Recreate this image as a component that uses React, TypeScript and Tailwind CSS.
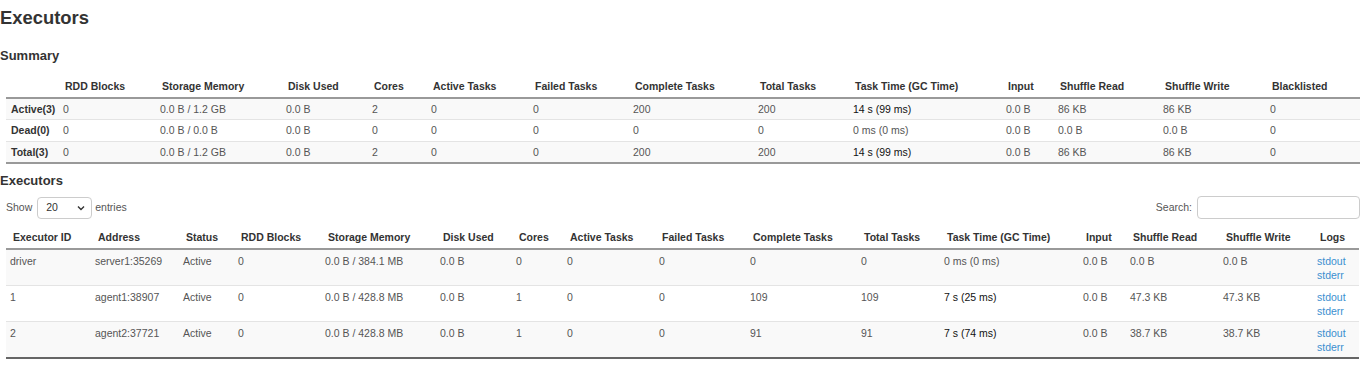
import React from 'react';

const font = { fontFamily: '"Liberation Sans", Arial, sans-serif' };

const summaryCols: { label: string; w: string }[] = [
  { label: '', w: 'w-[53px]' },
  { label: 'RDD Blocks', w: 'w-[97px]' },
  { label: 'Storage Memory', w: 'w-[126px]' },
  { label: 'Disk Used', w: 'w-[86px]' },
  { label: 'Cores', w: 'w-[59px]' },
  { label: 'Active Tasks', w: 'w-[102px]' },
  { label: 'Failed Tasks', w: 'w-[100px]' },
  { label: 'Complete Tasks', w: 'w-[125px]' },
  { label: 'Total Tasks', w: 'w-[95px]' },
  { label: 'Task Time (GC Time)', w: 'w-[153px]' },
  { label: 'Input', w: 'w-[52px]' },
  { label: 'Shuffle Read', w: 'w-[105px]' },
  { label: 'Shuffle Write', w: 'w-[107px]' },
  { label: 'Blacklisted', w: 'w-[94px]' },
];

const summaryRows = [
  ['Active(3)', '0', '0.0 B / 1.2 GB', '0.0 B', '2', '0', '0', '200', '200', '14 s (99 ms)', '0.0 B', '86 KB', '86 KB', '0'],
  ['Dead(0)', '0', '0.0 B / 0.0 B', '0.0 B', '0', '0', '0', '0', '0', '0 ms (0 ms)', '0.0 B', '0.0 B', '0.0 B', '0'],
  ['Total(3)', '0', '0.0 B / 1.2 GB', '0.0 B', '2', '0', '0', '200', '200', '14 s (99 ms)', '0.0 B', '86 KB', '86 KB', '0'],
];

const execCols: { label: string; w: string }[] = [
  { label: 'Executor ID', w: 'w-[85px]' },
  { label: 'Address', w: 'w-[88px]' },
  { label: 'Status', w: 'w-[55px]' },
  { label: 'RDD Blocks', w: 'w-[87px]' },
  { label: 'Storage Memory', w: 'w-[115px]' },
  { label: 'Disk Used', w: 'w-[76px]' },
  { label: 'Cores', w: 'w-[51px]' },
  { label: 'Active Tasks', w: 'w-[92px]' },
  { label: 'Failed Tasks', w: 'w-[91px]' },
  { label: 'Complete Tasks', w: 'w-[111px]' },
  { label: 'Total Tasks', w: 'w-[83px]' },
  { label: 'Task Time (GC Time)', w: 'w-[139px]' },
  { label: 'Input', w: 'w-[47px]' },
  { label: 'Shuffle Read', w: 'w-[93px]' },
  { label: 'Shuffle Write', w: 'w-[94px]' },
  { label: 'Logs', w: 'w-[46px]' },
];

const execRows = [
  ['driver', 'server1:35269', 'Active', '0', '0.0 B / 384.1 MB', '0.0 B', '0', '0', '0', '0', '0', '0 ms (0 ms)', '0.0 B', '0.0 B', '0.0 B'],
  ['1', 'agent1:38907', 'Active', '0', '0.0 B / 428.8 MB', '0.0 B', '1', '0', '0', '109', '109', '7 s (25 ms)', '0.0 B', '47.3 KB', '47.3 KB'],
  ['2', 'agent2:37721', 'Active', '0', '0.0 B / 428.8 MB', '0.0 B', '1', '0', '0', '91', '91', '7 s (74 ms)', '0.0 B', '38.7 KB', '38.7 KB'],
];

const App: React.FC = () => {
  return (
    <div className="bg-white text-[#555] text-[10.5px] leading-[14.5px] w-[1366px] h-[372px] overflow-hidden" style={font}>
      <h3 className="pt-[6px] text-[18.4px] leading-[24px] font-bold text-[#333]">Executors</h3>

      {/* Summary */}
      <h4 className="mt-[18px] text-[13px] leading-[15px] font-bold text-[#333]">Summary</h4>
      <table className="mt-[13px] ml-[6px] w-[1354px] table-fixed border-collapse">
        <thead>
          <tr>
            {summaryCols.map((c, i) => (
              <th key={i} className={`${c.w} pl-[6px] pr-1 pt-[3px] pb-[3px] text-left font-bold text-[#333] border-b-2 border-[#999] whitespace-nowrap`}>
                {c.label}
              </th>
            ))}
          </tr>
        </thead>
        <tbody>
          {summaryRows.map((row, r) => (
            <tr key={r} className={`${r % 2 === 0 ? 'bg-[#f9f9f9]' : 'bg-white'} ${r === summaryRows.length - 1 ? 'border-b-2 border-[#999]' : ''}`}>
              {row.map((v, i) => (
                <td
                  key={i}
                  className={`pt-[3px] pb-[3px] pr-1 whitespace-nowrap ${r > 0 ? 'border-t border-[#e4e4e4]' : ''} ${
                    i === 0 ? 'pl-[5px] font-bold text-[#333]' : 'pl-[4px]'
                  } ${i === 9 && v.startsWith('14') ? 'text-[#111]' : ''}`}
                >
                  {v}
                </td>
              ))}
            </tr>
          ))}
        </tbody>
      </table>

      {/* Executors */}
      <h4 className="mt-[9px] text-[13px] leading-[15px] font-bold text-[#333]">Executors</h4>
      <div className="mt-[8px] flex items-center justify-between pl-[6px] pr-[6px]">
        <div className="flex items-center">
          <span>Show</span>
          <div className="ml-[5px] w-[55px] h-[22px] border border-[#ccc] rounded-[4px] flex items-center justify-between pl-[8px] pr-[6px] text-[#333]">
            <span>20</span>
            <svg width="8" height="6" viewBox="0 0 8 6" fill="none">
              <path d="M1 1.5L4 4.5L7 1.5" stroke="#333" strokeWidth="1.4" />
            </svg>
          </div>
          <span className="ml-[3px]">entries</span>
        </div>
        <div className="flex items-center">
          <span>Search:</span>
          <div className="ml-[5px] w-[163px] h-[23px] border border-[#ccc] rounded-[4px]" />
        </div>
      </div>

      <table className="mt-[8px] ml-[6px] w-[1353px] table-fixed border-collapse">
        <thead>
          <tr>
            {execCols.map((c, i) => (
              <th key={i} className={`${c.w} pl-[7px] pr-1 py-[3px] text-left font-bold text-[#333] border-b-2 border-[#999] whitespace-nowrap`}>
                {c.label}
              </th>
            ))}
          </tr>
        </thead>
        <tbody>
          {execRows.map((row, r) => (
            <tr key={r} className={`${r % 2 === 0 ? 'bg-[#f9f9f9]' : 'bg-white'} ${r === execRows.length - 1 ? 'border-b-2 border-[#666]' : ''}`}>
              {row.map((v, i) => (
                <td
                  key={i}
                  className={`align-top pl-[4px] pr-1 pt-[4px] pb-[2px] whitespace-nowrap ${r > 0 ? 'border-t border-[#e4e4e4]' : ''} ${
                    i === 11 && !v.startsWith('0') ? 'text-[#111]' : ''
                  }`}
                >
                  {v}
                </td>
              ))}
              <td className={`align-top pl-[4px] pt-[4px] pb-[2px] ${r > 0 ? 'border-t border-[#e4e4e4]' : ''}`}>
                <a className="block text-[#3b8fd0]">stdout</a>
                <a className="block text-[#3b8fd0]">stderr</a>
              </td>
            </tr>
          ))}
        </tbody>
      </table>
    </div>
  );
};

export default App;
